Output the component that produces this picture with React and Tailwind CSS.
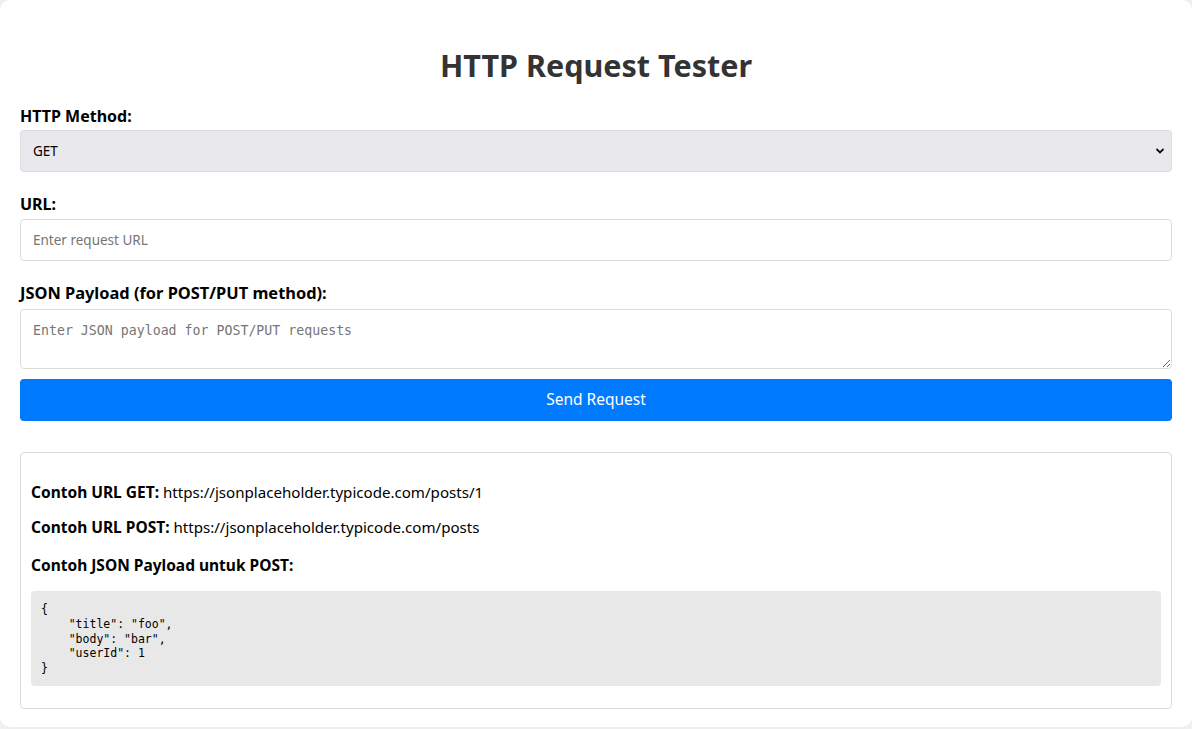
import { useState } from 'react';

const sans = { fontFamily: '"Noto Sans", "Open Sans", Arial, sans-serif' };
const mono = { fontFamily: '"DejaVu Sans Mono", "Liberation Mono", monospace' };

const samplePayload = `{
    "title": "foo",
    "body": "bar",
    "userId": 1
}`;

const App = () => {
    const [method, setMethod] = useState('GET');
    const [url, setUrl] = useState('');
    const [payload, setPayload] = useState('');

    return (
        <div className="min-h-screen bg-[#f5f5f6]" style={sans}>
            <div className="bg-white rounded-[10px] shadow-[0_0_10px_rgba(0,0,0,0.08)] px-5 pt-[45px] pb-[18px]">
                <h1 className="text-center text-[30.5px] leading-[40px] font-bold text-[#333] mb-[21px]">
                    HTTP Request Tester
                </h1>

                <label className="block h-5 leading-5 text-[16px] font-bold text-black mb-1">HTTP Method:</label>
                <div className="relative mb-[22px]">
                    <select
                        value={method}
                        onChange={e => setMethod(e.target.value)}
                        className="appearance-none w-full h-[42px] bg-[#e9e9ed] border border-[#dcdcdc] rounded-[4px] pl-3 text-[13.5px] text-black outline-none"
                    >
                        <option>GET</option>
                        <option>POST</option>
                        <option>PUT</option>
                        <option>DELETE</option>
                    </select>
                    <svg className="absolute right-[7px] top-[17px] w-[10px] h-[8px] pointer-events-none" viewBox="0 0 10 8" fill="none" stroke="#111" strokeWidth="1.8">
                        <path d="M1.5 2l3.5 3.5L8.5 2" />
                    </svg>
                </div>

                <label className="block h-5 leading-5 text-[16px] font-bold text-black mb-[5px]">URL:</label>
                <input
                    value={url}
                    onChange={e => setUrl(e.target.value)}
                    placeholder="Enter request URL"
                    className="block w-full h-[42px] bg-white border border-[#dcdcdc] rounded-[4px] pl-3 text-[13.5px] text-black placeholder:text-[#757575] outline-none mb-[22px]"
                />

                <label className="block h-5 leading-5 text-[16.4px] font-bold text-black mb-[6px]">JSON Payload (for POST/PUT method):</label>
                <textarea
                    value={payload}
                    onChange={e => setPayload(e.target.value)}
                    placeholder="Enter JSON payload for POST/PUT requests"
                    className="block w-full h-[60px] bg-white border border-[#dcdcdc] rounded-[4px] px-3 pt-[13px] pb-[8px] text-[13.25px] leading-[15px] text-black placeholder:text-[#757575] outline-none mb-[10px]"
                    style={mono}
                />

                <button className="block w-full h-[42px] bg-[#007bff] text-white text-[15.5px] rounded-[4px] mb-[31px]">
                    Send Request
                </button>

                <div className="border border-[#dcdcdc] rounded-[4px] px-[10px] pt-[27px] pb-[22px] text-[15.1px] text-black">
                    <p className="leading-6 mb-[11px]">
                        <strong className="text-[15.5px]">Contoh URL GET:</strong> https://jsonplaceholder.typicode.com/posts/1
                    </p>
                    <p className="leading-6 mb-[14px]">
                        <strong className="text-[15.5px]">Contoh URL POST:</strong> https://jsonplaceholder.typicode.com/posts
                    </p>
                    <p className="leading-6 mb-[14px]">
                        <strong className="text-[15.5px]">Contoh JSON Payload untuk POST:</strong>
                    </p>
                    <pre
                        className="bg-[#e8e8e8] rounded-[4px] px-[10px] pt-[11px] pb-[10px] text-[11.5px] leading-[14.8px] text-black"
                        style={mono}
                    >
                        {samplePayload}
                    </pre>
                </div>
            </div>
        </div>
    );
};

export default App;
